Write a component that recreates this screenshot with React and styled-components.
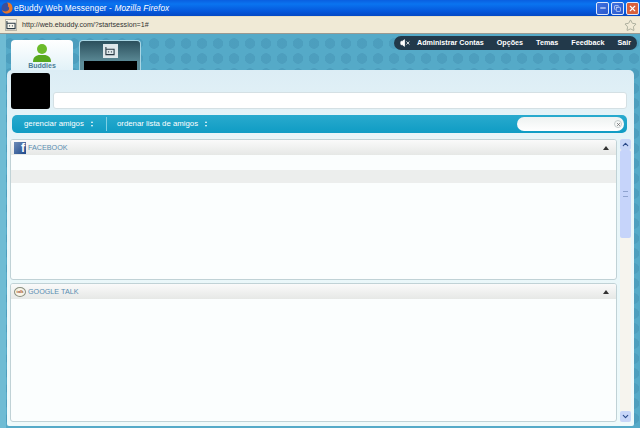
import React from 'react'
import styled, { createGlobalStyle } from 'styled-components'
import { Star, VolumeX, ChevronUp, ChevronDown, X, Minus, Copy } from 'lucide-react'

const GlobalStyle = createGlobalStyle`
    html, body { margin: 0; padding: 0; }
    body { width: 640px; height: 428px; overflow: hidden; font-family: "Liberation Sans", Arial, sans-serif; }
`

const Window = styled.div`
    width: 640px;
    height: 428px;
    display: flex;
    flex-direction: column;
    overflow: hidden;
`

const TitleBar = styled.div`
    height: 16px;
    flex: none;
    display: flex;
    align-items: center;
    gap: 1px;
    padding: 0 1px 0 1px;
    background: linear-gradient(#0a5fe0 0%, #0a74f0 25%, #0558dc 70%, #0448c4 100%);
`

const Title = styled.span`
    flex: 1;
    color: #fff;
    font: 8.3px/16px "Liberation Sans", sans-serif;
    letter-spacing: 0.1px;
    white-space: nowrap;
    em { font-style: italic; }
`

const WinButton = styled.span`
    width: 13px;
    height: 13px;
    margin-left: 1px;
    display: flex;
    align-items: center;
    justify-content: center;
    color: #fff;
    border: 1px solid #dfe8fa;
    border-radius: 2px;
    box-sizing: border-box;
    background: ${p => (p.$close ? '#d8603c' : 'linear-gradient(135deg, #3f72e0, #2a58cc)')};
`

const AddressBar = styled.div`
    height: 18px;
    flex: none;
    display: flex;
    align-items: center;
    padding: 0 3px 0 5px;
    gap: 5px;
    box-sizing: border-box;
    background: #f0ead6;
    border-top: 1px solid #e6dfc8;
    border-bottom: 1px solid #9a9a92;
`

const UrlIcon = styled.span`
    width: 12px;
    height: 12px;
    display: flex;
    align-items: center;
    justify-content: center;
    box-sizing: border-box;
    border: 1px solid #b9b6a8;
    background: #f8f6ec;
`

const Url = styled.span`
    flex: 1;
    font: 7.1px/14px "Liberation Sans", sans-serif;
    color: #333;
`

const Stage = styled.div`
    flex: 1;
    min-height: 0;
    display: flex;
    flex-direction: column;
    padding: 0 6px 2px 7px;
    background-color: #55aac8;
    background-image:
        linear-gradient(to right, #6fbcd4 0 6px, transparent 6px),
        radial-gradient(circle at 50% 50%, rgba(58, 130, 165, 0.3) 0 5px, transparent 5.5px);
    background-size: 100% 100%, 16px 15px;
    background-position: 0 0, 2px 2px;
`

const TopRow = styled.div`
    height: 36px;
    flex: none;
    display: flex;
    justify-content: space-between;
    align-items: flex-end;
`

const Tabs = styled.div`
    display: flex;
    gap: 6px;
    margin-left: 4px;
`

const BuddiesTab = styled.div`
    width: 62px;
    height: 30px;
    box-sizing: border-box;
    padding-top: 3px;
    display: flex;
    flex-direction: column;
    align-items: center;
    background: linear-gradient(#ffffff, #e2f2f8);
    border-radius: 4px 4px 0 0;
    font: bold 7px/8px "Liberation Sans", sans-serif;
    color: #4a7d96;
`

const DarkTab = styled.div`
    width: 62px;
    height: 30px;
    box-sizing: border-box;
    padding-top: 3px;
    display: flex;
    flex-direction: column;
    align-items: center;
    justify-content: space-between;
    background: linear-gradient(#2b4f5c, #5d8c98 75%);
    border: 1px solid #a9d6e4;
    border-bottom: 0;
    border-radius: 4px 4px 0 0;
`

const TabIcon = styled.span`
    width: 15px;
    height: 14px;
    display: flex;
    align-items: center;
    justify-content: center;
    background: #dfe7ea;
`

const Redacted = styled.div`
    width: 53px;
    height: 9px;
    background: #000;
`

const TopMenu = styled.nav`
    align-self: flex-start;
    margin: 2px -3px 0 0;
    height: 14px;
    width: 243px;
    box-sizing: border-box;
    padding: 0 6px;
    display: flex;
    align-items: center;
    gap: 13px;
    background: #22394a;
    border-radius: 7px;
    color: #fff;
    font: bold 7.2px/14px "Liberation Sans", sans-serif;
    white-space: nowrap;
`

const MenuLead = styled.span`
    display: flex;
    align-items: center;
    width: 10px;
    margin-right: -6px;
`

const Panel = styled.div`
    flex: 1;
    min-height: 0;
    display: flex;
    flex-direction: column;
    padding: 3px 3px 4px 3px;
    background: linear-gradient(#dcedf5 0, #e6f4f8 60px, #eefafb 100%);
    border-radius: 5px 5px 2px 2px;
`

const StatusRow = styled.div`
    height: 36px;
    flex: none;
    display: flex;
    align-items: flex-end;
    padding: 0 4px 0 1px;
    gap: 3px;
`

const Avatar = styled.div`
    width: 39px;
    height: 36px;
    background: #000;
    border-radius: 3px;
`

const StatusInput = styled.div`
    flex: 1;
    height: 17px;
    background: #fff;
    border: 1px solid #d4e0e4;
    border-radius: 3px;
    box-sizing: border-box;
`

const Toolbar = styled.div`
    height: 18px;
    flex: none;
    margin: 6px 4px 0 2px;
    padding: 0 3px 0 12px;
    display: flex;
    align-items: center;
    box-sizing: border-box;
    background: linear-gradient(#29aace, #0f9cc4);
    border-radius: 5px;
    color: #fff;
    font: 7.8px/18px "Liberation Sans", sans-serif;
`

const ToolItem = styled.span`
    display: flex;
    align-items: center;
    gap: 7px;
    width: ${p => p.$w}px;
    flex: none;
    white-space: nowrap;
    & + & {
        border-left: 1px solid #7fd0e4;
        padding-left: 10px;
        height: 14px;
    }
`

const SortArrows = styled.span`
    display: flex;
    flex-direction: column;
    gap: 2px;
    &::before, &::after {
        content: '';
        width: 0;
        height: 0;
        border-left: 1.5px solid transparent;
        border-right: 1.5px solid transparent;
    }
    &::before { border-bottom: 2px solid #fff; }
    &::after { border-top: 2px solid #fff; }
`

const SearchBox = styled.div`
    margin-left: auto;
    width: 107px;
    height: 14px;
    display: flex;
    align-items: center;
    justify-content: flex-end;
    padding-right: 2px;
    box-sizing: border-box;
    background: linear-gradient(#eef2f1, #fff);
    border-radius: 7px;
    color: #555;
`

const ClearBtn = styled.span`
    width: 8px;
    height: 8px;
    display: flex;
    align-items: center;
    justify-content: center;
    box-sizing: border-box;
    border: 1px solid #c4cccc;
    border-radius: 50%;
`

const ListArea = styled.div`
    flex: 1;
    min-height: 0;
    margin-top: 6px;
    display: flex;
    gap: 3px;
`

const Groups = styled.div`
    width: 608px;
    display: flex;
    flex-direction: column;
    gap: 3px;
`

const Group = styled.section`
    height: ${p => p.$h}px;
    flex: none;
    box-sizing: border-box;
    background: #fbfefe;
    border: 1px solid #c0d2d6;
    border-radius: 3px;
    overflow: hidden;
`

const GroupHeader = styled.header`
    height: 15px;
    display: flex;
    align-items: center;
    gap: 2px;
    padding: 0 4px 0 3px;
    background: linear-gradient(#fafafa, #e6e8e6);
    color: #5a8db0;
    font: 7.2px/15px "Liberation Sans", sans-serif;
`

const GroupName = styled.span`
    flex: 1;
`

const Collapse = styled.span`
    width: 0;
    height: 0;
    margin-right: 3px;
    border-left: 3.5px solid transparent;
    border-right: 3.5px solid transparent;
    border-bottom: 4px solid #333;
`

const FbIcon = styled.span`
    width: 12px;
    height: 12px;
    display: flex;
    align-items: flex-end;
    justify-content: flex-end;
    padding-right: 1px;
    box-sizing: border-box;
    background: linear-gradient(135deg, #6f8cb8, #1f4a8c);
    color: #fff;
    font: bold 12px/11px "Liberation Sans", sans-serif;
`

const TalkIcon = styled.span`
    width: 12px;
    height: 10px;
    display: flex;
    align-items: center;
    justify-content: center;
    box-sizing: border-box;
    border: 1px solid #8a8f80;
    border-radius: 50%;
    background: #f8f5e8;
    color: #a0522d;
    font: bold 4px/8px "Liberation Sans", sans-serif;
`

const GreyRow = styled.div`
    height: 13px;
    margin-top: 15px;
    background: #eceeed;
`

const Scrollbar = styled.div`
    width: 11px;
    flex: none;
    display: flex;
    flex-direction: column;
    background: #f6f4ee;
`

const ScrollBtn = styled.span`
    height: 11px;
    flex: none;
    display: flex;
    align-items: center;
    justify-content: center;
    background: #c8d6f8;
    border-radius: 2px;
    color: #2b4a8a;
`

const Thumb = styled.div`
    height: 88px;
    flex: none;
    display: flex;
    align-items: center;
    justify-content: center;
    background: #c6d4fa;
    border-radius: 2px;
    &::after {
        content: '';
        width: 5px;
        height: 4px;
        border-top: 1px solid #8fa3cf;
        border-bottom: 1px solid #8fa3cf;
    }
`

const ScrollGap = styled.div`
    flex: 1;
`

function Firefox() {
    return (
        <svg width="12" height="12" viewBox="0 0 12 12">
            <circle cx="6" cy="6" r="5.5" fill="#3a4f9c" />
            <path d="M6 .5a5.5 5.500 0 1 1-5.200 7.300C2 9.600 5 10 7 8.600 8.600 7.400 8.400 5 6.800 4.200 7.500 3 7 1.500 6 .5z" fill="#e8792a" />
        </svg>
    )
}

function BuddyIcon() {
    return (
        <svg width="20" height="19" viewBox="0 0 20 19">
            <circle cx="10" cy="6" r="5" fill="#6cbb2a" />
            <path d="M1 19c0-5 3-7 7-7h4c4 0 7 2 7 7z" fill="#58a81e" />
        </svg>
    )
}

function EbuddyGlyph() {
    return (
        <svg width="10" height="10" viewBox="0 0 11 11" fill="none" stroke="#2a3a44" strokeWidth="1.2">
            <path d="M1 1v8.500h9V3.500H1" />
            <path d="M3.500 6.500h1M6.500 6.500h1" />
        </svg>
    )
}

function App() {
    return (
        <Window>
            <GlobalStyle />
            <TitleBar>
                <Firefox />
                <Title>eBuddy Web Messenger - <em>Mozilla Firefox</em></Title>
                <WinButton><Minus size={8} strokeWidth={3} /></WinButton>
                <WinButton><Copy size={7} strokeWidth={2} /></WinButton>
                <WinButton $close><X size={9} strokeWidth={3} /></WinButton>
            </TitleBar>
            <AddressBar>
                <UrlIcon><EbuddyGlyph /></UrlIcon>
                <Url>http://web.ebuddy.com/?startsession=1#</Url>
                <Star size={13} color="#8a8f80" strokeWidth={1.2} />
            </AddressBar>
            <Stage>
                <TopRow>
                    <Tabs>
                        <BuddiesTab>
                            <BuddyIcon />
                            Buddies
                        </BuddiesTab>
                        <DarkTab>
                            <TabIcon><EbuddyGlyph /></TabIcon>
                            <Redacted />
                        </DarkTab>
                    </Tabs>
                    <TopMenu>
                        <MenuLead>
                            <VolumeX size={10} fill="#fff" strokeWidth={2} />
                        </MenuLead>
                        <span>Administrar Contas</span>
                        <span>Opções</span>
                        <span>Temas</span>
                        <span>Feedback</span>
                        <span>Sair</span>
                    </TopMenu>
                </TopRow>
                <Panel>
                    <StatusRow>
                        <Avatar />
                        <StatusInput />
                    </StatusRow>
                    <Toolbar>
                        <ToolItem $w={82}>gerenciar amigos <SortArrows /></ToolItem>
                        <ToolItem $w={110}>ordenar lista de amigos <SortArrows /></ToolItem>
                        <SearchBox><ClearBtn><X size={5} strokeWidth={3} /></ClearBtn></SearchBox>
                    </Toolbar>
                    <ListArea>
                        <Groups>
                            <Group $h={141}>
                                <GroupHeader>
                                    <FbIcon>f</FbIcon>
                                    <GroupName>FACEBOOK</GroupName>
                                    <Collapse />
                                </GroupHeader>
                                <GreyRow />
                            </Group>
                            <Group $h={139}>
                                <GroupHeader>
                                    <TalkIcon>talk</TalkIcon>
                                    <GroupName>GOOGLE TALK</GroupName>
                                    <Collapse />
                                </GroupHeader>
                            </Group>
                        </Groups>
                        <Scrollbar>
                            <ScrollBtn><ChevronUp size={9} strokeWidth={3} /></ScrollBtn>
                            <Thumb />
                            <ScrollGap />
                            <ScrollBtn><ChevronDown size={9} strokeWidth={3} /></ScrollBtn>
                        </Scrollbar>
                    </ListArea>
                </Panel>
            </Stage>
        </Window>
    )
}

export default App
